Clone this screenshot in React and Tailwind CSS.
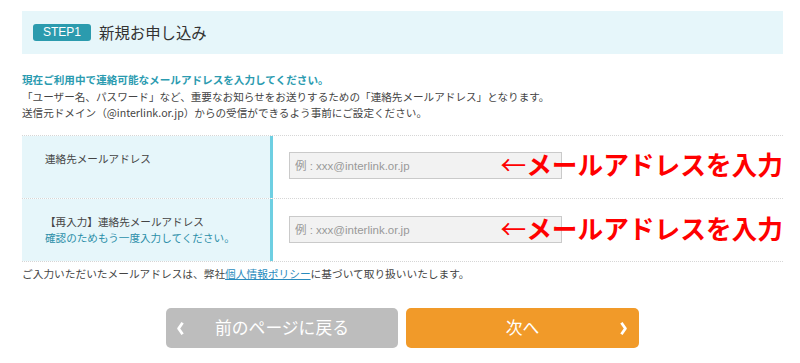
import React from 'react';

const font = { fontFamily: '"Noto Sans CJK JP", "Noto Sans", sans-serif' };
const latin = { fontFamily: '"Liberation Sans", "Noto Sans CJK JP", sans-serif' };

function Chevron({ dir = 'left' }) {
  return (
    <svg width="7" height="13" viewBox="0 0 7 13">
      <path
        d={dir === 'left' ? 'M5.6 0.8 L1.6 6.5 L5.6 12.2' : 'M1.4 0.8 L5.4 6.5 L1.4 12.2'}
        fill="none"
        stroke="white"
        strokeWidth="2.8"
        strokeLinejoin="round"
      />
    </svg>
  );
}

function EmailRow({ children, first = false }) {
  return (
    <div className="flex border-b border-dotted border-[#d6d6d6] h-[63px]">
      <div className="w-[248px] bg-[#e6f6fa] pl-[23px] pt-[15px] text-[10.6px] leading-[16px] text-[#444]">
        {children}
      </div>
      <div className="w-[3px] bg-[#6ecfe2]" />
      <div className={`relative flex-1 pl-[16px] ${first ? 'pt-[15px]' : 'pt-[16px]'}`}>
        <input
          type="text"
          placeholder="例 : xxx@interlink.or.jp"
          style={latin}
          className="w-[273px] h-[27px] bg-[#f2f2f2] border border-[#cacaca] px-[5px] text-[11.5px] placeholder:text-[#999] outline-none"
        />
        <div className={`absolute right-0 ${first ? 'top-[13px]' : 'top-[14px]'} text-[25.7px] leading-[30px] font-bold text-[#ff0000] whitespace-nowrap`}>
          <span className="font-normal">←</span>メールアドレスを入力
        </div>
      </div>
    </div>
  );
}

export default function App() {
  return (
    <div className="w-[800px] h-[363px] bg-white pl-[22px] pr-[17px] pt-[11px] overflow-hidden" style={font}>
      <div className="h-[43px] bg-[#e6f6fa] flex items-center pl-[11px]">
        <span className="h-[17px] px-[10px] rounded-[3px] bg-[#2b9bae] text-white text-[12px] leading-[17px]" style={latin}>
          STEP1
        </span>
        <span className="ml-[8px] text-[15.4px] text-[#333]">新規お申し込み</span>
      </div>

      <div className="mt-[18px] text-[10.6px] leading-[16.5px] text-[#444]">
        <p className="font-bold text-[#2b9bb0]">現在ご利用中で連絡可能なメールアドレスを入力してください。</p>
        <p>「ユーザー名、パスワード」など、重要なお知らせをお送りするための「連絡先メールアドレス」となります。</p>
        <p>送信元ドメイン（@interlink.or.jp）からの受信ができるよう事前にご設定ください。</p>
      </div>

      <div className="mt-[13px] border-t border-dotted border-[#d6d6d6]">
        <EmailRow first>
          <p>連絡先メールアドレス</p>
        </EmailRow>
        <EmailRow>
          <p>【再入力】連絡先メールアドレス</p>
          <p className="text-[#2a8ea8]">確認のためもう一度入力してください。</p>
        </EmailRow>
      </div>

      <p className="mt-[4px] text-[10.7px] leading-[16px] text-[#444]">
        ご入力いただいたメールアドレスは、弊社
        <a href="#" className="text-[#2a8bbd] underline">個人情報ポリシー</a>
        に基づいて取り扱いいたします。
      </p>

      <div className="mt-[26px] flex justify-center gap-[8px]">
        <button className="relative w-[232px] h-[40px] rounded-[5px] bg-[#bdbdbd] flex items-center justify-center text-white text-[16.8px]">
          <span className="absolute left-[11px] top-[14px] flex">
            <Chevron dir="left" />
          </span>
          前のページに戻る
        </button>
        <button className="relative w-[233px] h-[40px] rounded-[5px] bg-[#f19a29] flex items-center justify-center text-white text-[16.8px]">
          次へ
          <span className="absolute right-[12px] top-[14px] flex">
            <Chevron dir="right" />
          </span>
        </button>
      </div>
    </div>
  );
}
